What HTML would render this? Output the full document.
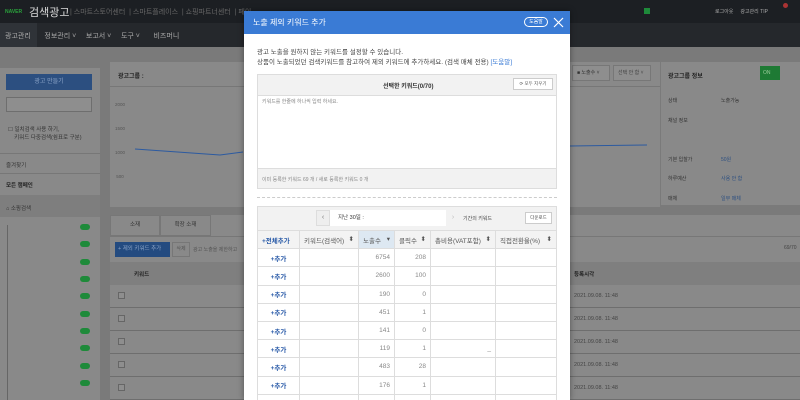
<!DOCTYPE html>
<html style="overflow:hidden;width:800px;height:400px"><head><meta charset="utf-8"><style>
*{margin:0;padding:0;box-sizing:border-box}
body{width:800px;height:400px;overflow:hidden;position:relative;background:#7a7a7a;font-family:"Liberation Sans","Noto Sans CJK KR",sans-serif;font-size:7px;color:#333}
.a{position:absolute}
.t{white-space:nowrap}
.on{position:absolute;left:80px;width:10px;height:6px;border-radius:3px;background:#1e8a3a;color:#8fd;font-size:4px;line-height:6px;text-align:center}
.row{position:absolute;left:110px;width:690px;height:23px;border-bottom:1px solid #6e6e6e;background:#898989}
.cb{position:absolute;left:8px;top:7px;width:7px;height:7px;border:1px solid #666;background:#8e8e8e}
td,th{border:1px solid #ddd;height:18.2px;font-size:6.5px;font-weight:normal;padding:0 4px;white-space:nowrap}
th{background:#f3f3f3;color:#555;text-align:left}
td{text-align:right;color:#888}
td.add{text-align:center;color:#2a5ba8;font-weight:bold}
</style></head><body>
<div class="a" style="left:0;top:0;width:800px;height:23px;background:#1c1f23"></div>
<div class="a t" style="left:5px;top:9px;font-size:5px;font-weight:bold;color:#2aa33c">NAVER</div>
<div class="a t" style="left:29px;top:4px;font-size:11px;color:#ddd">검색광고</div>
<div class="a t" style="left:70px;top:7px;font-size:7px;color:#666">| 스마트스토어센터 &nbsp;| 스마트플레이스 &nbsp;| 쇼핑파트너센터 &nbsp;| 페이</div>
<div class="a" style="left:644px;top:8px;width:6px;height:6px;background:#1e8a3a"></div>
<div class="a t" style="left:715px;top:8px;font-size:5px;color:#aaa">로그아웃 &nbsp; &nbsp; 광고관리 TIP</div>
<div class="a" style="left:783px;top:3px;width:5px;height:5px;border-radius:50%;background:#a33"></div>
<div class="a" style="left:0;top:23px;width:800px;height:24px;background:#25282c"></div>
<div class="a" style="left:0;top:23px;width:37px;height:24px;background:#2f3338"></div>
<div class="a t" style="left:5px;top:31px;font-size:7px;color:#aaa">광고관리 &nbsp; &nbsp; &nbsp; 정보관리 ˅ &nbsp; &nbsp; 보고서 ˅ &nbsp; &nbsp; 도구 ˅ &nbsp; &nbsp; &nbsp; 비즈머니</div>
<div class="a" style="left:0;top:68px;width:100px;height:332px;background:#898989"></div>
<div class="a" style="left:6px;top:74px;width:86px;height:16px;background:#2c4f80;color:#8aa3c6;font-size:6px;text-align:center;line-height:16px">광고 만들기</div>
<div class="a" style="left:6px;top:97px;width:86px;height:15px;border:1px solid #6e6e6e;background:#8e8e8e"></div>
<div class="a t" style="left:8px;top:126px;font-size:5.5px;color:#333;line-height:8px">☐ 일치검색 사용 하기,<br>&nbsp; &nbsp; 키워드 다중검색(쉼표로 구분)</div>
<div class="a" style="left:0;top:153px;width:100px;border-top:1px solid #777"></div>
<div class="a t" style="left:6px;top:161px;font-size:5.5px;color:#333">즐겨찾기</div>
<div class="a" style="left:0;top:173px;width:100px;border-top:1px solid #777"></div>
<div class="a t" style="left:6px;top:181px;font-size:5.5px;color:#222;font-weight:bold">모든 캠페인</div>
<div class="a" style="left:0;top:195px;width:100px;height:22px;background:#7e7e7e"></div>
<div class="a t" style="left:6px;top:204px;font-size:5.5px;color:#333">⌂ 소핑검색</div>
<div class="on" style="top:224px"></div><div class="on" style="top:241px"></div><div class="on" style="top:259px"></div><div class="on" style="top:276px"></div><div class="on" style="top:293px"></div><div class="on" style="top:311px"></div><div class="on" style="top:328px"></div><div class="on" style="top:345px"></div><div class="on" style="top:363px"></div><div class="on" style="top:380px"></div>
<div class="a" style="left:7px;top:225px;width:1px;height:175px;background:#666"></div>
<div class="a" style="left:110px;top:62px;width:550px;height:145px;background:#898989"></div>
<div class="a" style="left:110px;top:86px;width:550px;border-top:1px solid #777"></div>
<div class="a t" style="left:118px;top:71px;font-size:6px;font-weight:bold;color:#222">광고그룹 :</div>
<div class="a t" style="left:115px;top:93px;font-size:4.5px;color:#555;line-height:24px">2000<br>1500<br>1000<br>&nbsp;500</div>
<svg class="a" style="left:110px;top:62px" width="550" height="145"><polyline points="25,87 110,93 133,90" fill="none" stroke="#2c5aa0" stroke-width="1"/><polyline points="460,84 537,83" fill="none" stroke="#2c5aa0" stroke-width="1"/></svg>
<div class="a" style="left:572px;top:65px;width:38px;height:16px;border:1px solid #777;background:#8e8e8e;font-size:5px;color:#333;line-height:14px;padding-left:4px">■ 노출수 ˅</div>
<div class="a" style="left:613px;top:65px;width:38px;height:16px;border:1px solid #777;background:#8e8e8e;font-size:5px;color:#444;line-height:14px;padding-left:4px">선택 안 함 ˅</div>
<div class="a" style="left:661px;top:62px;width:139px;height:143px;background:#898989"></div>
<div class="a t" style="left:668px;top:71px;font-size:6px;font-weight:bold;color:#222">광고그룹 정보</div>
<div class="a" style="left:760px;top:66px;width:20px;height:14px;background:#1e7a34;color:#9c9;font-size:5px;line-height:14px;padding-left:3px">ON</div>
<div class="a t" style="left:668px;top:92px;font-size:5px;color:#333;line-height:19.5px">상태<br>채널 정보<br><br>기본 입찰가<br>하루예산<br>매체</div>
<div class="a t" style="left:721px;top:92px;font-size:5px;color:#2c4f80;line-height:19.5px"><span style="color:#333">노출가능</span><br><br><br>50원<br>사용 안 함<br>일부 매체</div>
<div class="a" style="left:110px;top:215px;width:690px;height:185px;background:#898989"></div>
<div class="a" style="left:110px;top:215px;width:50px;height:21px;border:1px solid #777;font-size:5.5px;text-align:center;line-height:19px">소재</div>
<div class="a" style="left:160px;top:215px;width:51px;height:21px;border:1px solid #777;font-size:5.5px;text-align:center;line-height:19px">확장 소재</div>
<div class="a" style="left:110px;top:236px;width:690px;border-top:1px solid #777"></div>
<div class="a t" style="left:115px;top:242px;width:55px;height:15px;background:#244b80;color:#8aa3c6;font-size:5.5px;line-height:15px;padding-left:3px">+ 제외 키워드 추가</div>
<div class="a" style="left:172px;top:242px;width:18px;height:15px;border:1px solid #777;font-size:5px;color:#555;text-align:center;line-height:13px">삭제</div>
<div class="a t" style="left:193px;top:246px;font-size:5px;color:#555">광고 노출을 제한하고</div>
<div class="a t" style="left:784px;top:245px;font-size:5px;color:#444">69/70</div>
<div class="a" style="left:110px;top:262px;width:690px;height:23px;background:#7f7f7f"></div>
<div class="a t" style="left:134px;top:270px;font-size:5.5px;font-weight:bold;color:#222">키워드</div>
<div class="a t" style="left:574px;top:270px;font-size:5.5px;font-weight:bold;color:#222">등록시각</div>
<div class="row" style="top:285px"><div class="cb"></div><span class="a t" style="left:464px;top:8px;font-size:5.5px;color:#444">2021.09.08. 11:48</span></div>
<div class="row" style="top:308px"><div class="cb"></div><span class="a t" style="left:464px;top:8px;font-size:5.5px;color:#444">2021.09.08. 11:48</span></div>
<div class="row" style="top:331px"><div class="cb"></div><span class="a t" style="left:464px;top:8px;font-size:5.5px;color:#444">2021.09.08. 11:48</span></div>
<div class="row" style="top:354px"><div class="cb"></div><span class="a t" style="left:464px;top:8px;font-size:5.5px;color:#444">2021.09.08. 11:48</span></div>
<div class="row" style="top:377px"><div class="cb"></div><span class="a t" style="left:464px;top:8px;font-size:5.5px;color:#444">2021.09.08. 11:48</span></div>
<div class="a" style="left:244px;top:11px;width:326px;height:389px;background:#fff;box-shadow:0 0 6px rgba(0,0,0,.4);overflow:hidden">
<div class="a" style="left:0;top:0;width:326px;height:23px;background:#3a7bd5"></div>
<div class="a t" style="left:9px;top:6px;font-size:8px;color:#fff">노출 제외 키워드 추가</div>
<div class="a" style="left:280px;top:6px;width:24px;height:10px;border:1px solid #fff;border-radius:5px;color:#fff;font-size:5px;text-align:center;line-height:8px">도움말</div>
<svg class="a" style="left:309px;top:6px" width="11" height="11"><path d="M1 1L10 10M10 1L1 10" stroke="#fff" stroke-width="1.2"/></svg>
<div class="a t" style="left:13px;top:37px;font-size:6.5px;color:#444;line-height:9.5px">광고 노출을 원하지 않는 키워드를 설정할 수 있습니다.<br>상품이 노출되었던 검색키워드를 참고하여 제외 키워드에 추가하세요. (검색 매체 전용) <span style="color:#3a7bd5">[도움말]</span></div>
<div class="a" style="left:13px;top:63px;width:300px;height:115px;border:1px solid #ddd;background:#f2f2f2"></div>
<div class="a t" style="left:139px;top:70px;font-size:6px;color:#333;font-weight:bold">선택한 키워드(0/70)</div>
<div class="a" style="left:269px;top:67px;width:40px;height:12px;border:1px solid #ccc;background:#fff;font-size:4.5px;color:#555;text-align:center;line-height:10px">⟳ 모두 지우기</div>
<div class="a" style="left:14px;top:84px;width:298px;height:74px;background:#fff;border-top:1px solid #ddd;border-bottom:1px solid #ddd"></div>
<div class="a t" style="left:18px;top:87px;font-size:5px;color:#888">키워드를 한줄에 하나씩 입력 하세요.</div>
<div class="a t" style="left:18px;top:165px;font-size:5px;color:#888">이미 등록한 키워드 69 개 / 새로 등록한 키워드 0 개</div>
<div class="a" style="left:13px;top:186px;width:300px;border-top:1px dashed #ccc"></div>
<div class="a" style="left:13px;top:195px;width:300px;height:200px;border:1px solid #ddd;background:#f2f2f2"></div>
<div class="a" style="left:72px;top:199px;width:14px;height:16px;background:#eee;border:1px solid #ddd;color:#777;font-size:7px;text-align:center;line-height:14px">‹</div>
<div class="a t" style="left:86px;top:199px;width:116px;height:16px;background:#fff;font-size:5.5px;color:#333;line-height:16px;padding-left:8px">지난 30일 :</div>
<div class="a" style="left:202px;top:199px;width:14px;height:16px;color:#bbb;font-size:7px;text-align:center;line-height:16px">›</div>
<div class="a t" style="left:219px;top:204px;font-size:5px;color:#444">기간의 키워드</div>
<div class="a" style="left:281px;top:201px;width:27px;height:12px;border:1px solid #ccc;background:#fff;font-size:4.5px;color:#444;text-align:center;line-height:10px">다운로드</div>
<table class="a" style="left:13px;top:219px;width:300px;border-collapse:collapse;background:#fff">
<tr><th style="width:42px;color:#2a5ba8;font-weight:bold">+전체추가</th><th style="width:59px">키워드(검색어) <span style="float:right">⬍</span></th><th style="width:36px;background:#dde8f2">노출수 <span style="float:right">▾</span></th><th style="width:36px">클릭수 <span style="float:right">⬍</span></th><th style="width:65px">총비용(VAT포함) <span style="float:right">⬍</span></th><th>직접전환율(%) <span style="float:right">⬍</span></th></tr>
<tr><td class="add">+추가</td><td></td><td>6754</td><td>208</td><td></td><td></td></tr>
<tr><td class="add">+추가</td><td></td><td>2600</td><td>100</td><td></td><td></td></tr>
<tr><td class="add">+추가</td><td></td><td>190</td><td>0</td><td></td><td></td></tr>
<tr><td class="add">+추가</td><td></td><td>451</td><td>1</td><td></td><td></td></tr>
<tr><td class="add">+추가</td><td></td><td>141</td><td>0</td><td></td><td></td></tr>
<tr><td class="add">+추가</td><td></td><td>119</td><td>1</td><td>_</td><td></td></tr>
<tr><td class="add">+추가</td><td></td><td>483</td><td>28</td><td></td><td></td></tr>
<tr><td class="add">+추가</td><td></td><td>176</td><td>1</td><td></td><td></td></tr>
<tr><td class="add">+추가</td><td></td><td>1221</td><td>3</td><td></td><td></td></tr>
</table>
</div>
</body></html>
